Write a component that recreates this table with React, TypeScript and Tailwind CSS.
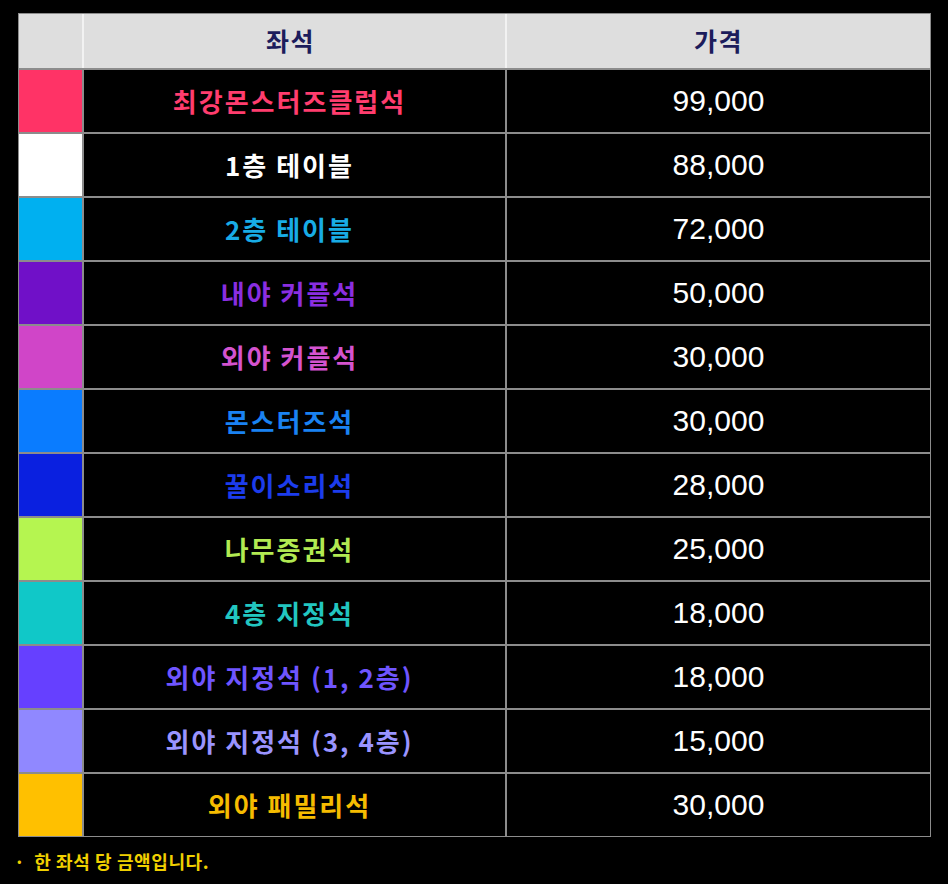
const rows = [
  { name: "최강몬스터즈클럽석", price: "99,000", swatch: "bg-[#ff3366]", text: "text-[#ff3d6e]" },
  { name: "1층 테이블", price: "88,000", swatch: "bg-[#ffffff]", text: "text-[#ffffff]" },
  { name: "2층 테이블", price: "72,000", swatch: "bg-[#00b0f0]", text: "text-[#18ace6]" },
  { name: "내야 커플석", price: "50,000", swatch: "bg-[#7010c8]", text: "text-[#8a2ee0]" },
  { name: "외야 커플석", price: "30,000", swatch: "bg-[#d045c8]", text: "text-[#d453cf]" },
  { name: "몬스터즈석", price: "30,000", swatch: "bg-[#0a7cff]", text: "text-[#1a82f2]" },
  { name: "꿀이소리석", price: "28,000", swatch: "bg-[#0a20e0]", text: "text-[#1c3cec]" },
  { name: "나무증권석", price: "25,000", swatch: "bg-[#b5f550]", text: "text-[#b2ea52]" },
  { name: "4층 지정석", price: "18,000", swatch: "bg-[#10c8c8]", text: "text-[#22c6c0]" },
  { name: "외야 지정석 (1, 2층)", price: "18,000", swatch: "bg-[#6640ff]", text: "text-[#6f55ff]" },
  { name: "외야 지정석 (3, 4층)", price: "15,000", swatch: "bg-[#9088ff]", text: "text-[#9a94ff]" },
  { name: "외야 패밀리석", price: "30,000", swatch: "bg-[#ffc000]", text: "text-[#f6bc00]" },
];

const kr = "font-['Noto_Sans_CJK_KR','Noto_Sans',sans-serif]";

export default function App() {
  return (
    <div className={`min-h-screen w-full bg-black pt-[13px] ${kr}`}>
      <div className="ml-[18px] flex w-[913px] flex-col gap-[2px] bg-[#8c8c8c] p-[1px]">
        {/* header */}
        <div className="grid h-[54px] grid-cols-[63px_421px_423px] gap-[2px] bg-[#f2f2f2]">
          <div className="bg-[#dedede]" />
          <div className="flex items-center justify-center bg-[#dedede] pr-[8px] text-[25px] font-bold tracking-[1.5px] text-[#1c1c5c]">
            좌석
          </div>
          <div className="flex items-center justify-center bg-[#dedede] text-[25px] font-bold tracking-[1.5px] text-[#1c1c5c]">
            가격
          </div>
        </div>

        {rows.map((r, i) => (
          <div key={i} className="grid h-[62px] grid-cols-[63px_421px_423px] gap-[2px]">
            <div className={r.swatch} />
            <div className={`flex items-center justify-center bg-black pb-[2px] pr-[10px] text-[26px] font-bold tracking-[2px] ${r.text}`}>
              {r.name}
            </div>
            <div className="flex items-center justify-center bg-black pb-[2px] font-['Liberation_Sans',Arial,sans-serif] text-[30px] text-white">
              {r.price}
            </div>
          </div>
        ))}
      </div>

      <p className="mt-[11px] flex items-center gap-[9px] pl-[14px] text-[18px] font-bold tracking-[0.6px] text-[#f0d000]">
        <span>·</span>
        <span>한 좌석 당 금액입니다.</span>
      </p>
    </div>
  );
}
